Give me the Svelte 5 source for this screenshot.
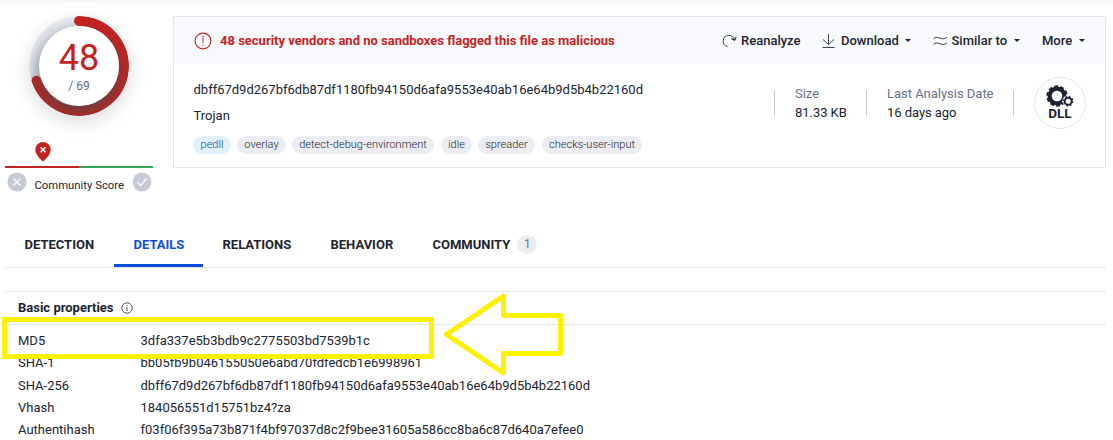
<script>
  const tags = [
    { name: 'pedll', width: 38, gap: 0, accent: true },
    { name: 'overlay', width: 49, gap: 6 },
    { name: 'detect-debug-environment', width: 142, gap: 6 },
    { name: 'idle', width: 31, gap: 7 },
    { name: 'spreader', width: 57, gap: 6 },
    { name: 'checks-user-input', width: 100, gap: 7 }
  ];
  const tabs = [
    { name: 'DETECTION', width: 109 },
    { name: 'DETAILS', width: 89, active: true },
    { name: 'RELATIONS', width: 108 },
    { name: 'BEHAVIOR', width: 102 },
    { name: 'COMMUNITY', width: 145, count: 1 }
  ];
  const properties = [
    ['MD5', '3dfa337e5b3bdb9c2775503bd7539b1c'],
    ['SHA-1', 'bb05fb9b046155050e6abd70fdfedcb1e6998961'],
    ['SHA-256', 'dbff67d9d267bf6db87df1180fb94150d6afa9553e40ab16e64b9d5b4b22160d'],
    ['Vhash', '184056551d15751bz4?za'],
    ['Authentihash', 'f03f06f395a73b871f4bf97037d8c2f9bee31605a586cc8ba6c87d640a7efee0']
  ];
  const circumference = 2 * Math.PI * 45;
  const arc = (circumference * 48) / 69;
</script>

<div class="page">
  <section class="summary">
    <aside class="score">
      <div class="ring">
        <svg width="100" height="100" viewBox="0 0 100 100" fill="none" stroke-width="10">
          <circle cx="50" cy="50" r="45" stroke="#e2e4eb" />
          <circle cx="50" cy="50" r="45" stroke="#c5221f" stroke-linecap="round" stroke-dasharray="{arc} {circumference}" transform="rotate(-90 50 50)" />
        </svg>
        <div class="dial"><strong>48</strong><span>/ 69</span></div>
      </div>
      <div class="marker">
        <svg width="16" height="20" viewBox="0 0 16 20"><path d="M8 0a7.7 7.7 0 0 0-7.7 7.7C.3 12 4.7 16.600 8 19.500c3.300-2.900 7.700-7.500 7.700-11.800A7.700 7.700 0 0 0 8 0Z" fill="#c5221f" /><path d="m5.500 5.200 5 5m0-5-5 5" stroke="#fff" stroke-width="1.500" /></svg>
      </div>
      <div class="bar"><i></i><i></i></div>
      <div class="votes">
        <svg width="20" height="20" viewBox="0 0 20 20" fill="none"><circle cx="10" cy="10" r="9.600" fill="#c6cad7" /><path d="m6.500 6.500 7 7m0-7-7 7" stroke="#fff" stroke-width="1.200" /></svg>
        <span>Community Score</span>
        <svg width="20" height="20" viewBox="0 0 20 20" fill="none"><circle cx="10" cy="10" r="9.400" fill="#c6cad7" /><path d="m5.500 10 3.200 3.500 6-7" stroke="#fff" stroke-width="1.200" /></svg>
      </div>
    </aside>

    <article class="card">
      <header>
        <svg class="alert" width="18" height="18" viewBox="0 0 18 18" fill="none" stroke="#c5221f"><circle cx="9" cy="9" r="7.900" stroke-width="1.100" /><path d="M9 4v7M9 12.500v1.300" stroke-width="1.300" opacity=".7" /></svg>
        <b class="verdict">48 security vendors and no sandboxes flagged this file as malicious</b>
        <nav>
          <button class="reanalyze"><svg width="15" height="14" viewBox="0 0 15 14"><path d="M5.500 12.500A5.600 5.600 0 1 1 12.300 6" fill="none" stroke="#3c4254" stroke-width="1" /><path d="m9.300 4.500 3.300 1.700L14.200 3.100" fill="none" stroke="#22273a" stroke-width="1.200" /></svg><span>Reanalyze</span></button>
          <button class="download"><svg width="13" height="14" viewBox="0 0 13 14" fill="none" stroke="#3c4254" stroke-width="1"><path d="M6.500 0v10.500M1 5.500l5.500 5 5.500-5M.5 13.500h12" /></svg><span>Download</span><i class="caret"></i></button>
          <button class="similar"><svg width="15" height="10" viewBox="0 0 15 10" fill="none" stroke="#3c4254" stroke-width="1"><path d="M.5 2.600c2-1.600 4-1.600 6.500-.5s4.500.9 7-.8M.5 8.300c2-1.600 4-1.600 6.500-.5s4.500.9 7-.8" /></svg><span>Similar to</span><i class="caret"></i></button>
          <button class="more"><span>More</span><i class="caret"></i></button>
        </nav>
      </header>
      <div class="body">
        <div class="file">
          <div class="hash">dbff67d9d267bf6db87df1180fb94150d6afa9553e40ab16e64b9d5b4b22160d</div>
          <div class="name">Trojan</div>
          <div class="tags">
            {#each tags as tag}
              <span class:accent={tag.accent} style="width:{tag.width}px;margin-left:{tag.gap}px">{tag.name}</span>
            {/each}
          </div>
        </div>
        <div class="meta size"><span>Size</span><div>81.33 KB</div></div>
        <div class="meta date"><span>Last Analysis Date</span><div>16 days ago</div></div>
        <div class="meta filetype">
          <div class="type">
            <svg width="28" height="22" viewBox="0 0 28 22" fill="none" stroke="#1f2433">
              <circle cx="11" cy="11" r="7.400" stroke-width="4.200" />
              <circle cx="11" cy="11" r="9.700" stroke-width="2" stroke-dasharray="3.800 2.295" />
              <circle cx="22.200" cy="16.200" r="5.800" fill="#fff" stroke="none" />
              <circle cx="22.200" cy="16.200" r="3.500" stroke-width="1.900" />
              <circle cx="22.200" cy="16.200" r="4.700" stroke-width="1.100" stroke-dasharray="2 1.691" />
            </svg>
            <b>DLL</b>
          </div>
        </div>
      </div>
    </article>
  </section>

  <nav class="tabs">
    {#each tabs as tab}
      <div class="tab" class:active={tab.active} style="width:{tab.width}px">
        <span>{tab.name}</span>{#if tab.count}<em>{tab.count}</em>{/if}
      </div>
    {/each}
  </nav>

  <section class="details">
    <h2>Basic properties
      <svg width="12" height="12" viewBox="0 0 12 12" fill="none" stroke="#3c4254"><circle cx="6" cy="6" r="5.200" stroke-width=".9" /><path d="M6 5v4M6 3v1" stroke-width=".9" /></svg>
    </h2>
    <dl>
      {#each properties as [label, value]}
        <dt>{label}</dt><dd>{value}</dd>
      {/each}
    </dl>
  </section>

  <div class="highlight"></div>
  <svg class="arrow" width="130" height="90" viewBox="440 290 130 90" fill="none" stroke="#fff200" stroke-width="5"><path d="M446.500 334.500 503.500 296v19.500H560.500V353.500H503.500V373Z" stroke-linejoin="round" shape-rendering="crispEdges" /></svg>
</div>

<style>
  :global(body) { background: #fff; overflow: hidden; }
  .page, .page * { box-sizing: border-box; }
  .page {
    position: relative; width: 1113px; height: 440px; overflow: hidden; padding: 16px 7px 0 5px;
    font: 13px/18px Roboto, sans-serif; color: #20242f;
    background: linear-gradient(#f5f5f5, #fff 5px);
  }
  svg { display: block; flex: none; }
  .summary { display: flex; gap: 20px; height: 206px; }
  .score { width: 148px; flex: none; }
  .ring { position: relative; width: 100px; height: 100px; margin: 0 auto; border-radius: 50%; box-shadow: 0 6px 20px rgba(0, 0, 0, .14); }
  .ring svg { border-radius: 50%; }
  .ring::after {
    content: ""; position: absolute; inset: 0; border-radius: 50%;
    background: radial-gradient(circle at 50% 57%, rgba(60, 75, 80, .56) 34px, rgba(60, 75, 80, .3) 41px, rgba(60, 75, 80, .08) 49px, rgba(60, 75, 80, 0) 54px);
  }
  .dial {
    position: absolute; z-index: 1; inset: 10px; border-radius: 50%; background: #fff;
    display: flex; flex-direction: column; align-items: center;
  }
  .dial strong { font-size: 36px; font-weight: 400; line-height: 40px; color: #c5221f; margin-top: 12px; }
  .dial span { font-size: 12px; line-height: 16px; color: #5f6b84; }
  .marker { margin: 26px 0 0 30.4px; }
  .bar { display: flex; margin-top: 4px; }
  .bar i { height: 2px; width: 74px; background: #c5221f; }
  .bar i + i { background: #34a853; }
  .votes { display: flex; align-items: flex-start; justify-content: space-between; margin: 3.500px 1px 0 1.500px; font-size: 11.300px; }
  .votes span { padding-top: 5.500px; }
  .card { width: 933px; height: 152px; border: 1px solid #e1e6ef; }
  .card header { display: flex; align-items: center; height: 47px; padding: 0 20px; background: #f8fafd; }
  .verdict { margin-left: 8px; color: #c5221f; font-weight: 700; white-space: nowrap; }
  header nav { display: flex; margin-left: auto; height: 18px; }
  button { border: 0; padding: 0; background: none; color: inherit; font: 500 13px/18px Roboto, sans-serif; display: flex; align-items: center; white-space: nowrap; flex: none; }
  .reanalyze { width: 100px; } .reanalyze svg { margin-right: 4px; }
  .download { width: 111px; } .download svg { margin-right: 6px; }
  .similar { width: 109px; } .similar svg { margin-right: 3.500px; }
  .more { width: 43px; }
  .caret { width: 0; height: 0; border: 3px solid transparent; border-top-color: #20242f; border-bottom: 0; margin-left: 6.500px; }
  .body { display: flex; height: 103px; padding: 16px 19px 0 20px; }
  .file { width: 580px; white-space: nowrap; margin-top: 1px; }
  .hash, .name { margin-left: -.5px; }
  .name { margin-top: 8px; }
  .tags { display: flex; margin: 11px 0 0 -1px; }
  .tags span { height: 18px; border-radius: 9px; background: #ecedf3; text-align: center; font-size: 11px; font-weight: 300; line-height: 17px; letter-spacing: .03px; color: #20242f; flex: none; }
  .tags .accent { background: #e1f1fe; color: #0b4d98; }
  .meta { height: 26px; margin-top: 10px; border-left: 1px solid #c9cbd0; padding-left: 20px; white-space: nowrap; }
  .meta > span { display: block; margin-top: -5px; color: #67718a; letter-spacing: -.02px; }
  .meta > span + div { margin-top: 1px; letter-spacing: -.05px; }
  .size { width: 92px; } .date { width: 147px; }
  .type { width: 52px; height: 52px; margin-top: -13px; border: 1px solid #e3e6f0; border-radius: 50%; display: flex; flex-direction: column; align-items: center; padding-top: 7px; }
  .type b { font-size: 13.500px; line-height: 13px; font-weight: 700; }
  .tabs { display: flex; height: 46px; width: 1101px; border-bottom: 1px solid #e3e5ed; }
  .tab { height: 45px; padding: 14px 0 0 19.5px; font-weight: 700; color: #20242f; display: flex; white-space: nowrap; }
  .active { color: #0b4dda; border-bottom: 3px solid #0b4dda; }
  .tab em { font: 400 12px/19px Roboto, sans-serif; width: 20px; height: 19px; border-radius: 10px; background: #ecedf3; color: #67718a; text-align: center; margin: -1px 0 0 7px; }
  .details { width: 1101px; margin-top: 23px; border-top: 1px solid #e3e5ed; }
  h2 { margin: 0; height: 33px; padding: 0 13px; border-bottom: 1px solid #e3e5ed; display: flex; align-items: center; gap: 7px; font-size: 13px; font-weight: 700; }
  dl { display: grid; grid-template-columns: 122.5px 1fr; grid-auto-rows: 22.200px; align-items: center; margin: 0; padding: 5.200px 0 0 13px; }
  dd { margin: 0; }
  .highlight { position: absolute; left: 2px; top: 317px; width: 432px; height: 42px; border: 5px solid #fff200; }
  .arrow { position: absolute; left: 440px; top: 290px; }
</style>
